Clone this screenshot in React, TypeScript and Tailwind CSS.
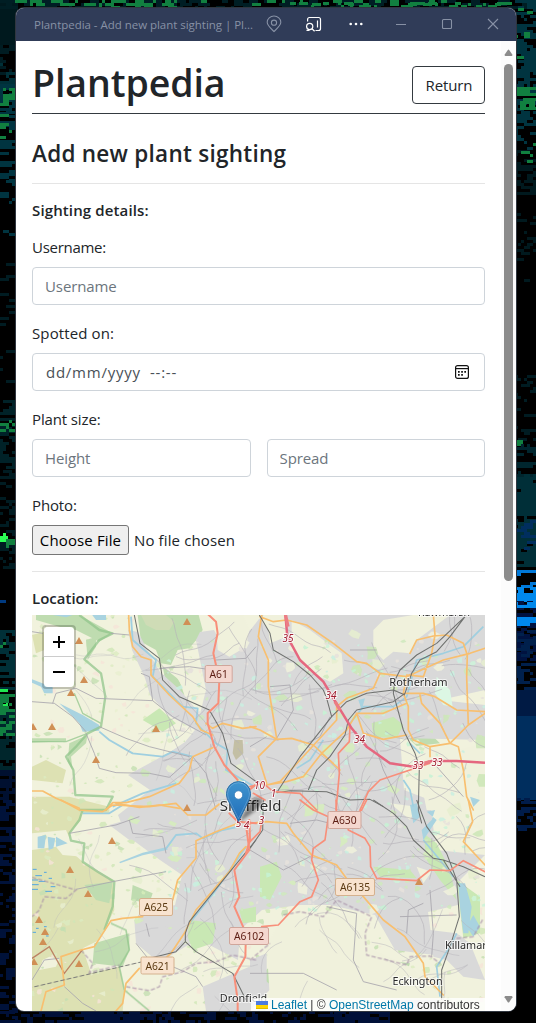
import React from "react";

/* ---------- deterministic noise ---------- */
function makeRandom(seed: number) {
  let s = seed;
  return () => {
    s = (s * 1664525 + 1013904223) % 4294967296;
    return s / 4294967296;
  };
}

/* ---------- desktop wallpaper ---------- */
type Band = [number, number, number, number, string, number, number?];

const bands: Band[] = [
  [0, 18, 0, 45, "#00191e", 1],
  [0, 18, 45, 90, "#001c22", 0.35],
  [0, 18, 60, 90, "#003038", 0.2],
  [0, 18, 84, 112, "#003440", 0.75],
  [3, 18, 88, 100, "#118040", 0.65],
  [0, 12, 100, 106, "#118040", 0.6],
  [0, 18, 112, 130, "#003440", 0.6],
  [0, 18, 114, 128, "#118040", 0.45],
  [0, 12, 130, 150, "#118040", 0.45],
  [0, 18, 140, 180, "#003440", 0.6],
  [0, 15, 180, 202, "#003440", 0.3],
  [3, 18, 230, 234, "#003440", 0.8],
  [0, 18, 260, 400, "#001c22", 0.28],
  [0, 18, 400, 470, "#002228", 0.55],
  [0, 18, 420, 430, "#118040", 0.5],
  [0, 18, 470, 570, "#001c22", 0.35],
  [0, 8, 533, 540, "#2bff55", 0.8],
  [6, 18, 539, 547, "#118040", 0.8],
  [0, 18, 600, 602, "#003a80", 0.2],
  [0, 18, 630, 690, "#003038", 0.7],
  [0, 18, 642, 648, "#118040", 0.5],
  [0, 8, 686, 710, "#20e850", 0.4],
  [0, 18, 694, 716, "#118040", 0.75],
  [0, 18, 712, 770, "#00262c", 0.85],
  [0, 15, 712, 736, "#118040", 0.45],
  [0, 18, 770, 800, "#001030", 0.6],
  [0, 18, 800, 1023, "#00123a", 0.4],
  [0, 536, 0, 8, "#001e24", 0.55],
  [0, 536, 0, 4, "#118040", 0.22],
  [60, 180, 0, 8, "#118040", 0.25],
  [290, 516, 2, 8, "#118040", 0.35],
  [515, 536, 0, 120, "#003440", 0.65],
  [515, 536, 8, 14, "#118040", 0.5],
  [515, 530, 29, 36, "#118040", 0.6],
  [515, 528, 56, 66, "#118040", 0.45],
  [515, 536, 87, 96, "#118040", 0.9],
  [520, 536, 98, 108, "#118040", 0.6],
  [515, 536, 120, 150, "#003440", 0.4],
  [518, 536, 134, 148, "#118040", 0.3],
  [515, 536, 150, 195, "#00191e", 0.6],
  [521, 533, 151, 163, "#118040", 0.5],
  [515, 536, 195, 285, "#00191e", 0.12],
  [515, 536, 375, 440, "#001c22", 0.28],
  [515, 523, 440, 444, "#118040", 1],
  [515, 536, 444, 480, "#00262e", 0.45],
  [515, 536, 474, 565, "#002f38", 0.88],
  [515, 536, 520, 550, "#002e5e", 0.35],
  [515, 536, 570, 574, "#0078d8", 0.7],
  [515, 536, 582, 586, "#0078d8", 0.4],
  [515, 536, 587, 601, "#0088ec", 0.72],
  [515, 536, 601, 660, "#001240", 0.7],
  [515, 536, 602, 606, "#0088ec", 0.9],
  [515, 536, 617, 625, "#0088ec", 0.8],
  [515, 536, 630, 690, "#00204c", 0.35],
  [515, 536, 690, 716, "#001a44", 1],
  [515, 536, 716, 798, "#002e5e", 1],
  [515, 536, 798, 830, "#001c4a", 0.4],
  [0, 350, 1008, 1023, "#001038", 0.4],
  [84, 140, 1011, 1023, "#001038", 0.8],
  [334, 390, 1011, 1023, "#001038", 0.8],
];

function wallpaperCells() {
  const rnd = makeRandom(77);
  const cells: { x: number; y: number; w: number; c: string }[] = [];
  for (const [x0, x1, y0, y1, c, d] of bands) {
    if (d >= 1) {
      for (let y = y0; y < y1; y += 3) cells.push({ x: x0, y, w: x1 - x0, c });
      continue;
    }
    for (let y = y0; y < y1; y += 3) {
      for (let x = x0; x < x1; ) {
        const w = 3 * (1 + Math.floor(rnd() * 3));
        if (rnd() < d) cells.push({ x, y, w: Math.min(w, x1 - x), c });
        x += w;
      }
    }
  }
  return cells;
}

const cells = wallpaperCells();

function Wallpaper() {
  return (
    <svg className="absolute inset-0" width="536" height="1023" shapeRendering="crispEdges">
      {cells.map((c, i) => (
        <rect key={i} x={c.x} y={c.y} width={c.w} height={3} fill={c.c} />
      ))}
    </svg>
  );
}

/* ---------- map ---------- */
function blob(rnd: () => number, cx: number, cy: number, r: number) {
  const n = 6;
  const pts: string[] = [];
  for (let i = 0; i < n; i++) {
    const a = (i / n) * Math.PI * 2;
    const q = r * (0.4 + rnd() * 0.9);
    pts.push(`${(cx + Math.cos(a) * q * 1.2).toFixed(1)},${(cy + Math.sin(a) * q).toFixed(1)}`);
  }
  return pts.join(" ");
}

function scatter(seed: number, n: number, colors: string[], box: number[], rMin: number, rMax: number) {
  const rnd = makeRandom(seed);
  return Array.from({ length: n }, () => {
    const x = box[0] + rnd() * (box[2] - box[0]);
    const y = box[1] + rnd() * (box[3] - box[1]);
    const r = rMin + rnd() * (rMax - rMin);
    return { p: blob(rnd, x, y, r), c: colors[Math.floor(rnd() * colors.length)] };
  });
}

function lanes(seed: number, n: number, box: number[]) {
  const rnd = makeRandom(seed);
  return Array.from({ length: n }, () => {
    let x = box[0] + rnd() * (box[2] - box[0]);
    let y = box[1] + rnd() * (box[3] - box[1]);
    let a = rnd() * 6.3;
    let d = `M${x.toFixed(1)} ${y.toFixed(1)}`;
    const steps = 3 + Math.floor(rnd() * 3);
    for (let i = 0; i < steps; i++) {
      x += Math.cos(a) * 8;
      y += Math.sin(a) * 8;
      a += (rnd() - 0.5) * 1.2;
      const x2 = x + Math.cos(a) * 6;
      const y2 = y + Math.sin(a) * 6;
      d += `Q${x.toFixed(1)} ${y.toFixed(1)} ${x2.toFixed(1)} ${y2.toFixed(1)}`;
      x = x2;
      y = y2;
    }
    return d;
  });
}

const ruralPatches = [
  ...scatter(3, 340, ["#cfe6b6", "#c4dfb2", "#dcebc0", "#e9efd0", "#f6e4d8"], [32, 615, 225, 1011], 0.8, 3.6),
  ...scatter(9, 170, ["#cfe6b6", "#c4dfb2", "#dcebc0", "#f6e4d8"], [200, 900, 485, 1011], 0.8, 4),
];
const urbanPatches = [
  ...scatter(22, 70, ["#f0f1dc", "#d5edbb", "#cbe6b6", "#e6efcf"], [235, 620, 485, 910], 2.5, 7),
  ...scatter(23, 26, ["#d5edbb", "#cbe6b6", "#e6efcf"], [130, 760, 235, 960], 2, 6),
  ...scatter(21, 460, ["#cdf3d9", "#c6f2d3", "#cfe9bd", "#c9efe0", "#e6e2dc"], [165, 640, 485, 910], 0.8, 3),
];
const ruralLanes = lanes(31, 22, [35, 620, 200, 1005]);
const urbanLanes = lanes(32, 135, [165, 650, 480, 905]);
const southLanes = lanes(33, 26, [150, 900, 480, 1005]);

const peaks = [
  [187, 622], [79, 641], [84, 680], [71, 693], [33, 727], [52, 727], [156, 729], [96, 760], [187, 808],
  [112, 841], [70, 870], [88, 894], [39, 920], [45, 932], [43, 942], [34, 962], [79, 964], [419, 882],
];

const QA = "translate(16 610) scale(0.33333)";
const QB = "translate(250 610) scale(0.33333)";
const QC = "translate(16 800) scale(0.33333)";
const QD = "translate(250 800) scale(0.33333)";

function Shield({ x, y, w, label, red }: { x: number; y: number; w: number; label: string; red?: boolean }) {
  return (
    <g>
      <rect x={x - w / 2} y={y - 8.5} width={w} height={17} rx={1.5} fill={red ? "#f4d7cf" : "#f8e3cf"} stroke={red ? "#cfa69b" : "#d5b18e"} />
      <text x={x} y={y + 4} textAnchor="middle" fontSize="10.3" fill={red ? "#5c1c12" : "#5b3a12"}>{label}</text>
    </g>
  );
}

function Halo({ x, y, size, children, anchor = "middle" }: { x: number; y: number; size: number; children: string; anchor?: "middle" | "start" }) {
  return (
    <text x={x} y={y} fontSize={size} textAnchor={anchor} fill="#2b2b2b" stroke="#ffffff" strokeOpacity={0.65} strokeWidth={2} paintOrder="stroke">
      {children}
    </text>
  );
}

function Junction({ x, y, children }: { x: number; y: number; children: string }) {
  return (
    <text x={x} y={y} fontSize="10" fontStyle="italic" textAnchor="middle" fill="#a01c2e" stroke="#fff" strokeOpacity={0.8} strokeWidth={2} paintOrder="stroke">
      {children}
    </text>
  );
}

function MapDrawing() {
  return (
    <svg className="block h-full w-full font-['Noto_Sans',sans-serif]" viewBox="32 615 453 396" preserveAspectRatio="xMinYMin slice">
      <rect x="32" y="615" width="453" height="396" fill="#f1f2dd" />

      {/* moorland */}
      <g fill="#dde1b3">
        <path transform={QC} d="M48 0H200L195 60L160 100L160 150L205 190L250 215L290 240L295 330L250 420L200 445L225 520L310 500L325 580L320 633H48z" />
        <path transform={QA} d="M48 470L90 450L150 480L140 520L48 510zM48 560L160 560L280 590L280 610H48zM48 75L85 65V120L60 130z" />
      </g>
      <path transform={QC} fill="#f1f2dd" d="M48 100L150 90L165 125L200 130V170L140 165L120 140L48 150zM100 470L130 475L120 500L70 510L80 480z" />
      {ruralPatches.map((b, i) => (
        <polygon key={i} points={b.p} fill={b.c} opacity={0.8} />
      ))}

      {/* woodland */}
      <g fill="#bfdcb0">
        <path transform={QA} d="M365 15H548L560 60L545 85L520 115L485 120L465 165L435 160L420 120L375 95z" />
        <path transform={QA} d="M60 15H190L290 70L250 95L180 60L130 50L60 30zM440 170L490 210L505 255L480 250L450 220zM160 400L215 375L210 400L165 440L170 480L155 455zM48 385L150 385V394L48 398zM210 90L240 80V110L215 150z" />
        <path transform={QC} d="M205 255L290 245L280 310L240 300zM480 260L540 290L520 330L500 320zM440 340L510 335V400L440 370zM350 255L410 280L400 310L345 300zM235 430L340 400V450L320 500L230 490z" />
        <path transform={QB} d="M480 390L500 330L545 325L550 380L570 400L500 408z" />
        <path transform={QB} fillRule="evenodd" d="M215 120L270 110L285 180L250 235L225 190L190 210L200 170zM225 135L255 130L262 160L230 165z" />
        <path transform={QD} d="M135 385L180 410L170 440L110 470L100 440zM0 550L60 500L120 520L50 570zM370 500L400 480L480 490L470 520L380 510z" />
      </g>
      <path transform={QA} fill="#cfdcb6" d="M375 15H450L475 35L460 60L420 60L390 45z" />

      {/* built-up area */}
      <g fill="#d9d9d9">
        <path d="M196 640L200 632L214 630L222 645L240 640L252 628L262 615H485V690L440 700L485 705V740L400 738L404 790L430 800L436 850L485 855L460 880L458 905L428 912L434 955L395 950L375 915L330 905L300 905L262 910L240 930L238 960L200 940L188 945L155 965L138 925L138 915L175 905L182 875L160 860L126 835L118 815L150 790L128 775L170 752L185 742L195 730L168 715L150 695L145 678L132 650L128 630L138 632L150 655L160 672L180 690L200 714L206 690z" />
        <path transform={QC} d="M355 360L440 365L480 440L420 480L360 430zM560 560L700 500L770 560L700 633H570zM280 75L350 55L380 110L340 120z" />
        <path transform={QD} d="M0 480L50 460V560L0 600zM540 390L620 400L660 430L705 540L640 530L590 480L550 470zM430 590L470 560L540 560L580 633H430z" />
      </g>
      {/* fields inside the built-up area */}
      <g fill="#f0f1dc">
        <path transform={QA} d="M600 15H680L700 60L690 110L640 140L605 120zM470 180L500 130L540 150L555 210L550 260L510 250z" />
        <path transform={QB} d="M20 15H105L110 80L60 100L55 60zM125 30L180 60L240 105L275 130L280 190L240 215L170 180L125 115zM370 60L400 30L490 15H600L540 60L500 90L480 130L430 125L400 150L370 120zM540 410L600 400L620 420L705 400V600H530L510 500z" />
        <path transform={QD} d="M420 10L500 20L480 60zM545 0H655L640 100L600 90L560 60zM500 200L545 215L520 250zM100 345L230 350L345 345L350 440L480 500L590 600H60L50 440z" />
      </g>
      <g fill="#c9e8b4">
        <path transform={QD} d="M520 100L560 130L600 210L620 300L570 240L530 180zM370 200L480 210L500 235L390 230zM30 200L80 185L95 230L60 300L30 290zM620 240L690 290V400L640 415z" />
        <path transform={QC} d="M520 360L600 370L590 430L530 450L515 410zM670 330L720 320V365L680 370z" />
        <path transform={QB} d="M365 340L430 320L460 345L440 385L370 380z" />
        <path transform={QA} d="M380 330L430 295L480 340L440 365z" />
      </g>
      {urbanPatches.map((b, i) => (
        <polygon key={i} points={b.p} fill={b.c} opacity={0.85} />
      ))}
      <path transform={QB} d="M560 200L600 240L608 290L580 285L555 250z" fill="#dcf7e4" />
      <path transform={QA} d="M655 390H680L682 430L660 450L650 430z" fill="#c3bfa4" />

      {/* water */}
      <g fill="#a9d3e0">
        <path transform={QA} d="M130 280L200 315L250 345V362L200 365L190 340zM48 208L110 232V250L85 250L75 230L48 218zM110 15H170L150 22zM225 10H270V30L240 30z" />
        <path transform={QC} d="M65 110L90 105L85 145L65 145zM95 110L118 115L112 145L98 150zM120 110L155 130L120 140z" />
        <path transform={QC} d="M310 186L380 158L450 142L455 149L380 166L312 190z" />
        <path transform={QD} d="M480 15L500 10L510 50L490 70zM515 90L545 60L555 30L530 35L560 60L540 90L520 120zM625 250L645 250L665 320L655 400L640 400L630 320zM670 345L690 380L670 410L650 380z" />
        <path transform={QB} d="M660 560L690 570L670 590zM325 270L345 265L335 300z" />
      </g>
      <g fill="none" stroke="#9fcfe0" strokeWidth="5.5" strokeLinejoin="round">
        <path transform={QA} d="M345 20L350 90L420 150L410 200L440 230L500 290L545 295L540 340L600 400L635 420L630 480L715 530" />
        <path transform={QA} d="M250 365L280 390L350 430L440 440L470 425L530 440" />
        <path transform={QA} d="M290 590L380 550L480 520" />
        <path transform={QC} d="M200 40L280 40L320 15M450 146L480 105L540 100L560 115L620 90L670 80M690 140L600 270L520 370" />
        <path transform={QB} d="M700 50L640 110L580 130L500 150L470 260L430 290L340 290L300 340M220 390L180 450L140 475M480 400L510 430M460 510L480 540L490 590" strokeWidth="5" />
        <path transform={QD} d="M520 120L570 180L610 230M620 400L600 440L560 500L570 590" strokeWidth="5" />
      </g>
      <g stroke="#3b9be8" strokeWidth="2.6" transform={QC}>
        <path d="M50 208h12M84 217h8M58 227h20M48 240h18M68 244h20M98 235h10M48 254h20M48 268h18M88 274h20M104 260h14M60 385h8M84 380h8M50 397h10M90 408h8" />
      </g>

      {/* park boundary */}
      <g fill="none" stroke="#92c68c" strokeWidth="7" strokeLinejoin="round" opacity="0.75">
        <path transform={QA} d="M190 15L250 60L290 70L250 90L205 148L255 190L268 260L255 350L215 370L180 410L150 440L172 480L178 555L290 560L270 600L190 600" />
        <path transform={QC} d="M200 30L190 60L160 100L165 122L205 130L200 185L245 215L295 245L290 320L265 390" />
        <path transform={QC} d="M285 370L330 390L340 450L310 500L325 570L400 633" strokeWidth="5" />
        <path transform={QA} d="M48 395L150 395L215 370M175 250L200 310L255 340" strokeWidth="4" />
      </g>

      {/* minor roads */}
      <g fill="none" stroke="#b6b4ba" strokeWidth="0.65">
        {ruralLanes.map((d, i) => (
          <path key={`r${i}`} d={d} opacity={0.5} />
        ))}
        {urbanLanes.map((d, i) => (
          <path key={`u${i}`} d={d} />
        ))}
        {southLanes.map((d, i) => (
          <path key={`s${i}`} d={d} opacity={0.75} />
        ))}
      </g>
      <g fill="none" stroke="#a9a7ae" strokeWidth="2.6" strokeLinejoin="round">
        <path transform={QA} d="M48 65L80 70M180 235L240 265L410 272L470 320L570 375M250 350L330 385L400 410L520 440M210 370L235 430L250 475L300 488L400 490L460 502L530 440M340 75L285 70M48 275L115 280L170 320L210 365M110 280L120 250L180 235M430 175L520 170L590 180M530 440L570 490L600 600M720 110L690 145L600 150M410 272L400 200L375 190" />
        <path transform={QC} d="M180 268L290 245L450 215M48 540L85 480L130 475M145 560L200 610L240 633M160 100L300 75L370 50M340 60L350 100L440 110L450 160M360 430L400 480M400 410L390 370M470 500L540 530L560 560" />
        <path transform={QB} d="M60 230L120 225L130 300L80 385M240 320L210 380L170 400M300 120L380 120M380 420L400 480L450 580M0 410L50 380M560 470L640 560" />
        <path transform={QD} d="M0 150L100 210L180 170M120 70L200 60L280 80M230 320L320 340L310 480L340 545L440 570M470 400L475 330L520 310M540 270L550 400L545 470M450 350L620 345M0 520L160 520L260 570" />
      </g>
      <g fill="none" stroke="#a790a8" strokeWidth="4" strokeDasharray="13 6" opacity="0.75">
        <path transform={QC} d="M48 232L180 270L150 295L85 290L70 330L48 350M195 450L230 490L220 518L310 495M330 560L400 572L430 560L440 530L500 515L540 490L600 485L650 465L720 480" />
        <path transform={QD} d="M0 480L60 430M100 345L150 335L220 350L260 300L365 350L345 400L350 465L470 495L480 470L540 468L570 490M620 415L670 410L700 355" />
      </g>
      <path transform={QC} d="M48 475L100 440L145 520L200 448" fill="none" stroke="#bd8263" strokeWidth="4" />

      {/* secondary roads */}
      <g fill="none" stroke="#f8bf6f" strokeWidth="5" strokeLinejoin="round" strokeLinecap="round">
        <path transform={QA} d="M338 15L340 60L350 110L375 140L405 150L405 195L460 255L530 320L555 360L590 375M570 340L590 355L620 340L680 355L720 350M590 413L530 440L520 480L490 520L400 560L330 578L290 578L270 600" />
        <path transform={QA} d="M48 543L80 543L120 565L190 595M300 580L370 592L430 585L490 595" />
        <path transform={QC} d="M135 0L190 30L260 35L290 15L400 20L480 10L515 45L570 45L610 12M670 68L600 95L540 122L540 175L485 240L470 300M380 350L320 355L285 362L235 440L195 450L135 470L145 555L90 575L75 633M690 140L670 160L640 215L540 330L505 400L465 460L430 490M370 505L330 550L320 610L300 633" />
        <path transform={QB} d="M35 15L25 80L55 150L55 230L68 310L80 385L25 440L50 520M0 350L30 360L80 388L125 385L190 405L270 480M30 20L70 35L110 30L170 45L250 100L320 155L350 160L390 190L470 200M50 525L110 515L160 500L215 430L290 360L320 310L400 310L470 280M50 525L90 515L150 450L260 330L260 290L290 265L370 235L390 190M550 15L555 75L545 130L520 200L470 195M480 130L500 90L550 78L590 75L640 100L652 135L650 200L655 345L600 400L540 410L490 390L475 360L475 290L460 250L470 200L580 150L660 130L705 115M460 250L520 250L555 260L620 300L705 305M510 255L515 280L570 340L600 400L625 410L640 480L650 560L670 600M320 310L340 370L400 388L470 375M540 410L540 440M655 345L705 310M215 430L250 460" />
        <path transform={QD} d="M0 70L50 65L110 70L130 100L185 165L260 195L300 250L340 290L400 360L465 410L520 490L525 530L580 585M655 0L668 65L640 125L705 195" />
      </g>

      {/* railways */}
      <g fill="none" stroke="#6f716f" strokeWidth="3.1" strokeLinejoin="round">
        <path transform={QA} d="M355 15L372 100L430 145L440 210L490 260L580 300L620 370L645 460L720 515" />
        <path transform={QB} d="M28 15L60 70L70 120L130 155L180 195L220 240L230 265L245 320M645 20L560 100L500 135L450 180L435 210L430 250L460 360L495 430L508 470L505 600L515 640M645 20L600 80L560 125L510 150L485 190L465 250L430 275L320 300L295 330L285 375L240 440L200 480L175 540M80 548L150 440L245 320L290 275L350 250L430 240L465 255M80 548L120 542L230 545L300 570L360 568L400 590" />
        <path transform={QD} d="M370 0L430 40L470 80L490 120L550 175L580 180L630 260M500 0L530 80L590 160L620 240L628 350L600 440L575 510V600M580 180L640 200L705 230M40 0L38 90L0 145" />
        <path transform={QC} d="M720 120L650 205L520 365L508 400V425L480 455L380 480M508 425L540 455L650 520L690 600" />
      </g>
      <path transform={QC} d="M380 485L48 562" fill="none" stroke="#777" strokeWidth="3" strokeDasharray="14 6" />

      {/* primary roads */}
      <g fill="none" stroke="#f88f7a" strokeWidth="6" strokeLinejoin="round" strokeLinecap="round">
        <path transform={QA} d="M575 12L600 35L605 70L592 130L610 210L607 280L575 310L575 340L595 410L625 465L665 510M700 540L718 525" />
        <path transform={QB} d="M0 530L40 520L70 545L150 550L200 600M300 345L298 395L265 430L268 490L258 600M540 460L480 480L390 510L355 545L330 600M10 550L45 570" strokeWidth="5" />
        <path transform={QD} d="M150 0L190 30L235 50L225 120L190 145L185 180L205 240L185 290L150 305L85 375L35 380M350 0L335 30L290 60L295 90L345 115L360 140L362 200L380 235L500 242L540 210L600 212L640 182L705 215M258 0L260 40M0 125L30 95L35 65" strokeWidth="5" />
        <path transform={QC} d="M640 40L665 65L720 70M690 75L700 150L655 210L670 290L655 320L690 400L688 470L655 530L665 600V633" />
        <path transform={QC} d="M700 60L702 120L690 160" />
      </g>

      {/* motorway */}
      <path transform={QB} d="M106 12L112 80L150 150L220 215L250 265L305 355L350 410L420 460L490 470L545 453H620L705 458" fill="none" stroke="#e5677f" strokeWidth="7.5" strokeLinejoin="round" />
      <path transform={QB} d="M106 12L114 50M255 275L270 300M490 470L540 455" fill="none" stroke="#ec7d84" strokeWidth="10" />

      {/* peaks */}
      <g fill="#d08f55">
        {peaks.map(([x, y]) => (
          <path key={`${x}-${y}`} d={`M${x - 4} ${y + 3}L${x} ${y - 4}L${x + 4} ${y + 3}z`} />
        ))}
      </g>

      <Shield x={218.7} y={674} w={27} label="A61" red />
      <Shield x={344.5} y={820} w={33} label="A630" red />
      <Shield x={355} y={887} w={39} label="A6135" />
      <Shield x={156} y={907} w={33} label="A625" />
      <Shield x={157.5} y={965.5} w={33} label="A621" />
      <Shield x={249} y={936} w={39} label="A6102" red />

      <Junction x={288} y={641.5}>35</Junction>
      <Junction x={331} y={699}>34</Junction>
      <Junction x={359.5} y={742.5}>34</Junction>
      <Junction x={418} y={768.5}>33</Junction>
      <Junction x={437} y={765.5}>33</Junction>
      <Junction x={259.5} y={789}>10</Junction>
      <Junction x={273.5} y={797}>1</Junction>
      <Junction x={261.5} y={823.5}>3</Junction>
      <Junction x={246.5} y={829}>4</Junction>
      <Junction x={238.5} y={827}>5</Junction>
      <Junction x={241} y={790}>7</Junction>

      <Halo x={444} y={615.5} size={10.5}>Rawmarsh</Halo>
      <Halo x={418.5} y={686} size={11}>Rotherham</Halo>
      <Halo x={250.5} y={811} size={15}>Sheffield</Halo>
      <Halo x={445} y={948.5} size={10.8} anchor="start">Killamarsh</Halo>
      <Halo x={417.5} y={985} size={10.8}>Eckington</Halo>
      <Halo x={243.5} y={1001.5} size={10.8}>Dronfield</Halo>

      {/* marker */}
      <defs>
        <linearGradient id="pin" x1="0" y1="0" x2="0" y2="1">
          <stop offset="0" stopColor="#4095cf" />
          <stop offset="1" stopColor="#1f6cb8" />
        </linearGradient>
        <filter id="soft" x="-30%" y="-30%" width="160%" height="160%">
          <feGaussianBlur stdDeviation="1.6" />
        </filter>
      </defs>
      <path d="M239 822L251 800Q260 795 262 801Q262 808 239 822z" fill="#000" opacity="0.42" filter="url(#soft)" />
      <path d="M238.5 821.5L229.2 802.5C227.5 799.5 226.5 797 226.5 793.6A12 12 0 0 1 250.5 793.6C250.5 797 249.5 799.5 247.8 802.5z" fill="url(#pin)" stroke="#2b6ea6" />
      <path d="M238.5 818.5L230.2 802C228.6 799 227.6 796.7 227.6 793.6A10.9 10.9 0 0 1 249.4 793.6C249.4 796.7 248.4 799 246.8 802z" fill="none" stroke="#fff" strokeOpacity="0.18" />
      <circle cx="238.5" cy="795" r="4.2" fill="#fff" stroke="#2b74b3" strokeWidth="0.7" />
    </svg>
  );
}

/* ---------- window chrome ---------- */
function TitleBar() {
  return (
    <div className="flex h-[33px] shrink-0 items-center bg-[#303c58] text-[#8791a5]">
      <div className="w-[238px] shrink-0 whitespace-nowrap pl-[18px] text-[11.5px] leading-4 tracking-[-0.03px]">
        Plantpedia - Add new plant sighting | Pl...
      </div>
      <svg width="262" height="33" viewBox="254 8 262 33" fill="none" stroke="#8791a5" strokeWidth="1.1">
        <path d="M274 31.5C271 28.6 267.2 25.600 267.200 22.300A6.800 6.300 0 0 1 280.800 22.300C280.800 25.600 277 28.600 274 31.500z" />
        <circle cx="274" cy="22.700" r="2.600" />
        <g stroke="#ffffff" strokeWidth="1.200">
          <path d="M307.600 21.500V19.500A2 2 0 0 1 309.600 17.500H318.500A2 2 0 0 1 320.500 19.500V28.500A2 2 0 0 1 318.500 30.500H315.500" />
          <circle cx="309.700" cy="26.500" r="3.100" />
          <path d="M312 28.800L314.600 31.300M306.500 30.400H309.500M317.500 20.500V27.500" />
        </g>
        <g fill="#ffffff" stroke="none">
          <circle cx="350.700" cy="24" r="1.300" />
          <circle cx="356" cy="24" r="1.300" />
          <circle cx="361.300" cy="24" r="1.300" />
        </g>
        <path d="M396 24.500H406" />
        <rect x="442.500" y="19.500" width="9" height="9" rx="1" />
        <path d="M488 19L498 29M498 19L488 29" />
      </svg>
    </div>
  );
}

function Scrollbar() {
  return (
    <div className="flex w-[15px] shrink-0 flex-col items-center bg-[#fcfcfc] pb-[8px] pt-[8px]">
      <svg width="9" height="7" viewBox="0 0 9 8" fill="#8b8b8b">
        <path d="M3.700 1Q4.500 0 5.300 1L9 6.500Q9 8 8 8H1Q0 8 0 6.500z" />
      </svg>
      <div className="mt-2 h-[517px] w-[9px] rounded-full bg-[#8b8b8b]" />
      <svg className="mt-auto" width="9" height="7" viewBox="0 0 9 8" fill="#8b8b8b">
        <path d="M3.700 7Q4.500 8 5.300 7L9 1.500Q9 0 8 0H1Q0 0 0 1.500z" />
      </svg>
    </div>
  );
}

function Label({ children }: { children: React.ReactNode }) {
  return <label className="block h-6 text-[15px] leading-6 tracking-[-0.13px]">{children}</label>;
}

const inputClass =
  "h-[38px] w-full min-w-0 rounded border border-[#ced4da] bg-white px-3 text-[15px] tracking-[-0.1px] placeholder:text-[#6c757d] placeholder:opacity-100 outline-none";

export default function App() {
  return (
    <div className="relative h-[1023px] w-[536px] overflow-hidden bg-black font-['Open_Sans','Noto_Sans',sans-serif] text-[#212529]">
      <Wallpaper />
      <div className="relative pl-4 pt-2">
        <div className="flex h-[1003px] w-[500px] flex-col overflow-hidden rounded-lg bg-white shadow-[0_0_0_1px_#30363f]">
          <TitleBar />
          <div className="flex min-h-0 flex-1">
            <main className="flex min-w-0 flex-1 flex-col px-4">
              <header className="flex h-[73px] shrink-0 items-end justify-between border-b border-[#343a40] pb-[9px]">
                <h1 className="text-[37.5px] font-semibold leading-[43px] tracking-[-0.1px]">Plantpedia</h1>
                <button className="h-[38px] w-[73px] rounded border border-[#343a40] pl-px text-[15px] tracking-[-0.1px]">Return</button>
              </header>
              <h2 className="flex h-[70px] shrink-0 items-center border-b border-[#e5e5e5] pt-[11px] text-[22.5px] font-semibold tracking-[0.26px]">
                Add new plant sighting
              </h2>
              <p className="mt-[14px] h-6 shrink-0 text-[15px] font-semibold leading-6 tracking-[0.13px]">Sighting details:</p>
              <form className="mt-[13px] flex flex-col gap-4">
                <div className="flex flex-col gap-2">
                  <label className="block h-6 text-[15px] leading-6 tracking-[-0.28px]">Username:</label>
                  <input className={inputClass} placeholder="Username" />
                </div>
                <div className="flex flex-col gap-2">
                  <label className="block h-6 text-[15px] leading-6 tracking-[0.12px]">Spotted on:</label>
                  <div className="flex h-[38px] items-center justify-between rounded border border-[#ced4da] pl-[13px] pr-[15px] text-[15px] text-[#495057]">
                    <span className="tracking-[0.75px]">dd/mm/yyyy&nbsp; --:--</span>
                    <svg width="14" height="14" viewBox="0 0 14 14" fill="none" stroke="#111" strokeWidth="1.200">
                      <rect x="0.600" y="0.600" width="12.800" height="12.800" rx="2" />
                      <path d="M0.600 3.600H13.400" />
                      <path d="M3 6.800h1.700M6.200 6.800h1.700M9.300 6.800h1.700M3 9.800h1.700M6.200 9.800h1.700" strokeWidth="1.700" />
                    </svg>
                  </div>
                </div>
                <div className="flex flex-col gap-2">
                  <Label>Plant size:</Label>
                  <div className="grid grid-cols-2 gap-4">
                    <input className={inputClass} placeholder="Height" />
                    <input className={inputClass} placeholder="Spread" />
                  </div>
                </div>
                <div className="flex flex-col gap-2">
                  <Label>Photo:</Label>
                  <div className="flex h-[30px] items-center gap-[5px] text-[15px] tracking-[0.13px]">
                    <button type="button" className="h-[30px] w-[97px] whitespace-nowrap rounded-[3px] border border-[#767676] bg-[#efefef] text-black">
                      Choose File
                    </button>
                    <span>No file chosen</span>
                  </div>
                </div>
              </form>
              <hr className="mt-4 shrink-0 border-[#e5e5e5]" />
              <p className="mt-[14px] h-[29px] shrink-0 text-[15px] font-semibold leading-6">Location:</p>
              <div className="relative min-h-0 flex-1 overflow-hidden bg-[#dddddd]">
                <MapDrawing />
                <div className="absolute left-[10px] top-[10px] flex flex-col rounded border-2 border-black/20 bg-clip-padding text-black">
                  <button className="flex h-[30px] w-[30px] items-center justify-center rounded-t-sm border-b border-[#ccc] bg-white">
                    <svg width="12" height="12" viewBox="0 0 12 12" stroke="#000" strokeWidth="2">
                      <path d="M6 0V12M0 6H12" />
                    </svg>
                  </button>
                  <button className="flex h-[30px] w-[30px] items-center justify-center rounded-b-sm bg-white">
                    <svg width="12" height="2" viewBox="0 0 12 2" stroke="#000" strokeWidth="2">
                      <path d="M0 1H12" />
                    </svg>
                  </button>
                </div>
                <div className="absolute bottom-0 right-0 flex h-[13px] w-[234px] items-center whitespace-nowrap bg-white/80 pl-[5px] pt-px font-['Liberation_Sans',sans-serif] text-[12px] leading-[14px] text-[#333]">
                  <svg className="mr-[3px] shrink-0" width="12" height="8" viewBox="0 0 12 8">
                    <path fill="#4c7be1" d="M0 0h12v4H0z" />
                    <path fill="#ffd500" d="M0 4h12v3H0z" />
                    <path fill="#e0bc00" d="M0 7h12v1H0z" />
                  </svg>
                  <span className="text-[#0078a8]">Leaflet</span>
                  <span>&nbsp;|&nbsp;©&nbsp;</span>
                  <span className="text-[#0078a8]">OpenStreetMap</span>
                  <span>&nbsp;contributors</span>
                </div>
              </div>
            </main>
            <Scrollbar />
          </div>
        </div>
      </div>
    </div>
  );
}
